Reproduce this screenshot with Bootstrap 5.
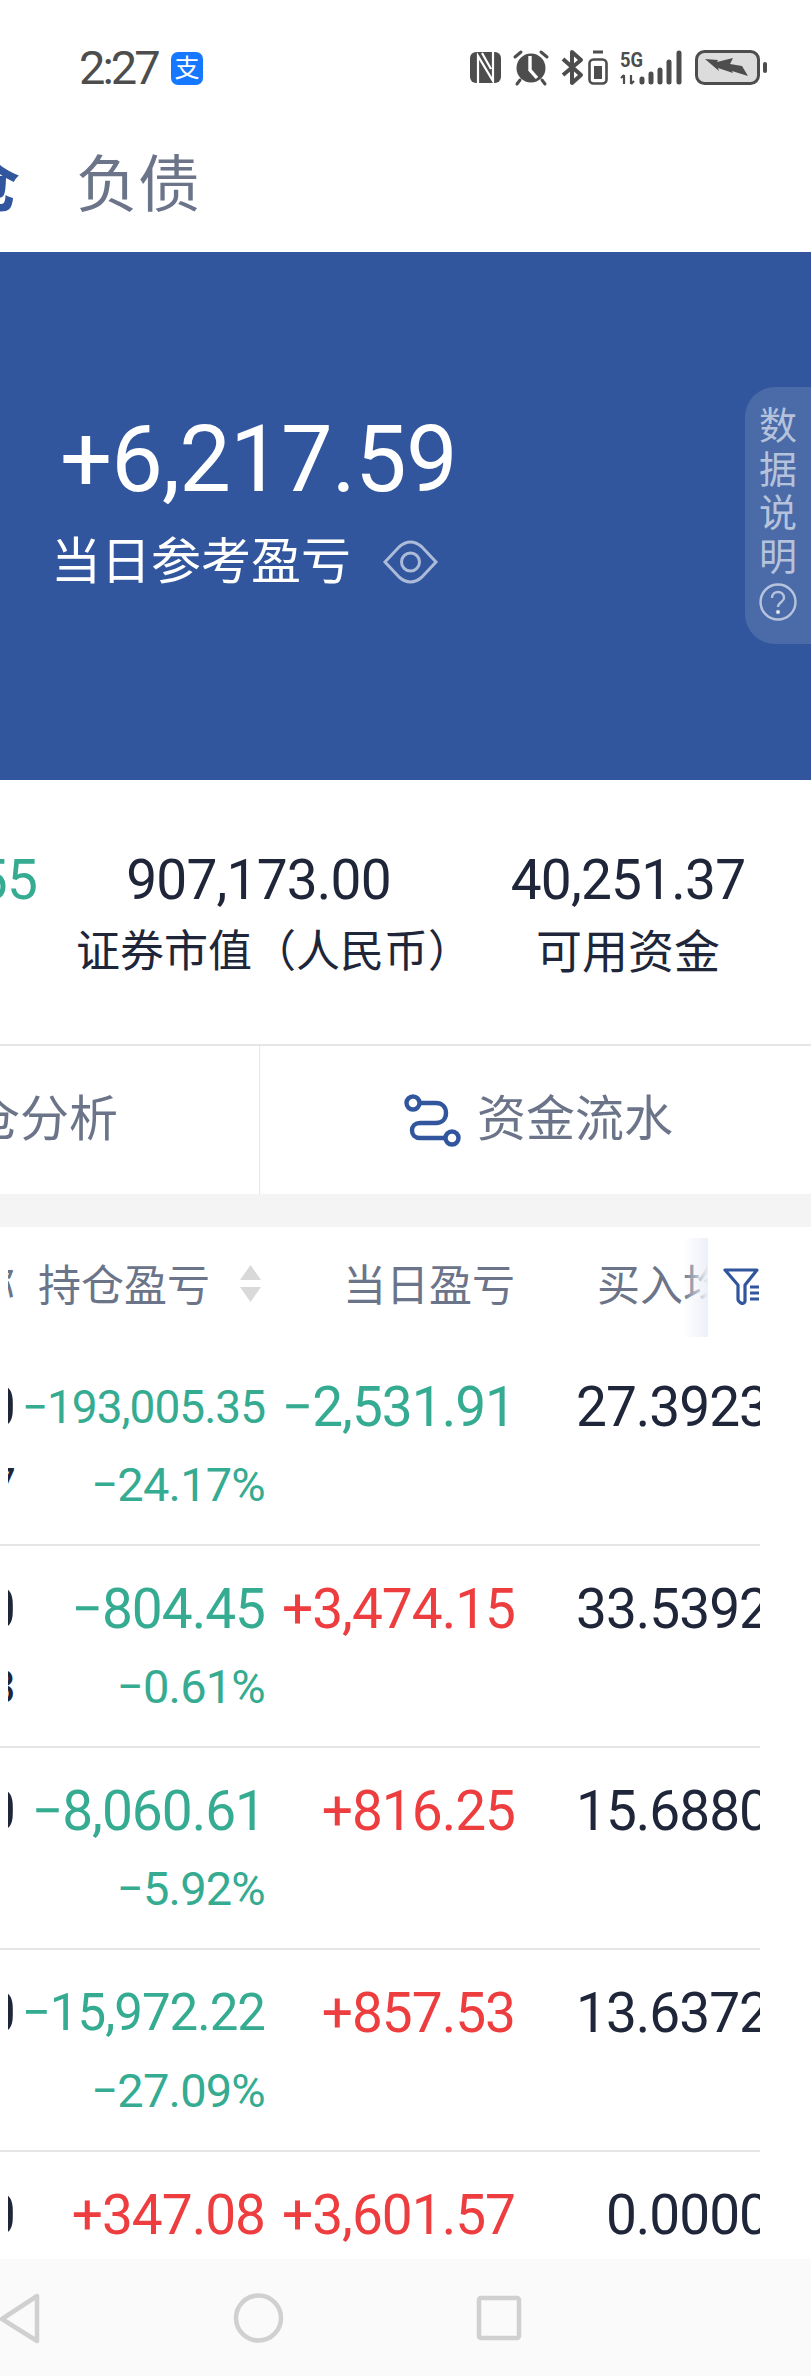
<!DOCTYPE html>
<html lang="zh-CN">
<head>
  <meta charset="UTF-8" />
  <meta name="viewport" content="width=device-width, initial-scale=1.0"/>
  <title>持仓</title>
  <link href="https://cdn.jsdelivr.net/npm/bootstrap@5.3.0/dist/css/bootstrap.min.css" rel="stylesheet"/>
  <style>
    html, body { width: 811px; height: 2376px; overflow: hidden; background: #fff; }
    body { font-family: Roboto, "Noto Sans CJK SC", sans-serif; color: #20263a; position: relative; }

    /* status bar */
    .status-bar { height: 128px; padding: 48px 0 0 79px; }
    .clock { font-size: 47px; line-height: 40px; letter-spacing: -3px; color: #4d4d4d; width: 92px; }
    .alipay { width: 32px; height: 33px; border-radius: 7px; background: #1677ff; color: #fff; font-size: 25px; line-height: 33px; text-align: center; margin-top: 4px; }
    .status-icons { margin-left: 265px; }

    /* tabs */
    .top-tabs { height: 124px; margin-left: -104px; font-size: 62px; line-height: 70px; padding-top: 23px; }
    .top-tabs .on { color: #31569d; font-weight: 700; width: 180px; flex: none; }
    .top-tabs .off { color: #6b7488; }

    /* banner */
    .banner { height: 528px; background: #31569d; color: #fff; position: relative; padding: 158px 0 0 60px; }
    .big-num { font-size: 92px; line-height: 100px; letter-spacing: -.9px; }
    .banner-label { font-size: 50px; line-height: 60px; margin: 22px 0 0 -9px; }
    .eye { margin-left: 31px; }
    .data-tab { position: absolute; right: 0; top: 135px; width: 66px; height: 257px; border-radius: 30px 0 0 30px; background: rgba(255,255,255,.12); color: rgba(255,255,255,.6); font-size: 38px; line-height: 43.5px; padding: 18px 0 0 14px; }

    /* stats */
    .stats { height: 264px; margin-left: -165px; padding-top: 68px; text-align: center; }
    .stat-num { font-size: 55px; line-height: 64px; letter-spacing: -.8px; }
    .stat-label { font-size: 44px; line-height: 60px; margin-top: 10px; white-space: nowrap; }
    .stat-a { width: 202px; flex: none; color: #35ab91; display: flex; justify-content: flex-end; align-items: flex-start; white-space: nowrap; }
    .stat-b { width: 396px; flex: none; margin-left: 39px; }
    .stat-b .stat-num { padding-right: 31px; }
    .stat-c { width: 240px; flex: none; margin-left: 36px; }
    .stat-c .stat-label { font-size: 46px; }

    .links { height: 150px; border-top: 2px solid #e6e6e6; font-size: 49px; color: #6b7488; }
    .link-left { width: 260px; flex: none; border-right: 1px solid #e6e6e6; overflow: hidden; justify-content: flex-end; padding-right: 141px; white-space: nowrap; }
    .link-right { padding-left: 144px; }
    .band { height: 33px; background: #f4f4f4; }

    /* table */
    .grid-wrap { width: 760px; overflow: hidden; height: 1032px; }
    .grid-head { height: 117px; font-size: 43px; color: #6b7488; line-height: 50px; white-space: nowrap; align-items: flex-start; padding-left: 8px; }
    .grid-head > div { margin-top: 34px; }
    .c0 { width: 7px; flex: none; overflow: hidden; display: flex; justify-content: flex-end; }
    .c1 { width: 250px; flex: none; text-align: right; }
    .c2 { width: 250px; flex: none; text-align: right; }
    .c3 { width: 254px; flex: none; text-align: right; }
    .head-c1 { width: 250px; flex: none; padding-left: 23px; display: flex; }
    .sort { margin: 4px 0 0 30px; }
    .head-c2 { width: 250px; flex: none; text-align: right; }
    .grid-head > .head-c3 { width: 193px; flex: none; overflow: hidden; padding: 23px 0 0 82px; position: relative; margin-top: 11px; height: 99px; }
    .head-c3::after { content: ""; position: absolute; right: 0; top: 0; bottom: 0; width: 25px; background: linear-gradient(to right, rgba(237,240,248,0), #edf0f8); }
    .filter { margin: 40px 0 0 15px; flex: none; }

    .grid-row { height: 202px; border-top: 2px solid #e6e6e6; font-size: 55px; letter-spacing: -1px; padding: 32px 0 0 8px; }
    .grid-row.first { border-top: 0; height: 200px; }
    .line-one { height: 62px; line-height: 62px; white-space: nowrap; }
    .line-two { font-size: 47px; line-height: 60px; margin-top: 17px; text-align: right; letter-spacing: -.8px; }
    .fall { color: #35ab91; }
    .rise { color: #ee3d3f; }
    .fit-s { font-size: 46px; }
    .fit-m { font-size: 51px; }

    /* nav bar */
    .nav-bottom { position: absolute; left: 0; right: 0; bottom: 0; height: 117px; background: #fafafa; }
  </style>
</head>
<body>

  <!-- status bar -->
  <div class="status-bar d-flex align-items-start">
    <div class="clock">2:27</div>
    <div class="alipay">支</div>
    <svg class="status-icons" width="300" height="40" viewBox="468 48 300 40">
      <!-- nfc -->
      <rect x="470" y="52" width="31" height="31" rx="6" fill="#4d4d4d"/>
      <path d="M478 84V56l15 25V51M482 53l9 16" stroke="#fff" stroke-width="2.200" fill="none"/>
      <!-- alarm -->
      <circle cx="531" cy="68" r="14.500" fill="#4d4d4d"/>
      <path d="M530 56v14l7 8" stroke="#fff" stroke-width="3.400" fill="none"/>
      <path d="M515 57l6-5M547 57l-6-5M520 80l-3 4M542 80l3 4" stroke="#4d4d4d" stroke-width="3" stroke-linecap="round"/>
      <!-- bluetooth -->
      <path d="M563 59l18 16-9 8V52l9 8-18 15" stroke="#4d4d4d" stroke-width="4" fill="none" stroke-linejoin="round"/>
      <!-- small battery -->
      <path d="M593 52h10" stroke="#4d4d4d" stroke-width="3"/>
      <rect x="589.500" y="59.500" width="17" height="24" rx="4" fill="none" stroke="#4d4d4d" stroke-width="2.600"/>
      <rect x="594" y="66" width="8" height="13" fill="#4d4d4d"/>
      <!-- signal -->
      <text x="620" y="67" font-family="Roboto" font-size="20" font-weight="700" fill="#4d4d4d" textLength="23" lengthAdjust="spacingAndGlyphs">5G</text>
      <path d="M624 75v9M621 78l3-3M631 75v9M634 81l-3 3" stroke="#4d4d4d" stroke-width="2.200" fill="none"/>
      <g stroke="#4d4d4d" stroke-width="5" stroke-linecap="round">
        <path d="M642 79v3M651 74v8M660 70v12M669 62v20M679 53v29"/>
      </g>
      <!-- battery -->
      <rect x="696.500" y="51.500" width="62" height="32" rx="8" fill="#dcdcdc" stroke="#4d4d4d" stroke-width="3"/>
      <path d="M705 59l13 1-1 2 16-4-3 6 12 2 6 10-16-5 1 2-15-5 1 3z" fill="#4d4d4d"/>
      <rect x="763" y="62" width="4" height="11" rx="2" fill="#4d4d4d"/>
    </svg>
  </div>

  <!-- tabs -->
  <div class="top-tabs d-flex">
    <div class="on">持仓</div>
    <div class="off">负债</div>
  </div>

  <!-- banner -->
  <div class="banner">
    <div class="big-num">+6,217.59</div>
    <div class="banner-label d-flex align-items-center">
      当日参考盈亏
      <svg class="eye" width="57" height="44" viewBox="0 0 57 44" fill="none" stroke="#fff" stroke-opacity=".6" stroke-width="3">
        <path d="M3 22L17 7Q28.500-3 40 7L54 22 40 37Q28.500 47 17 37z"/>
        <circle cx="28.500" cy="22" r="9"/>
      </svg>
    </div>
    <div class="data-tab">
      <div>数</div><div>据</div><div>说</div><div>明</div>
      <svg class="d-block mt-1" width="38" height="38" viewBox="0 0 38 38" fill="none" stroke="#fff" stroke-opacity=".6" stroke-width="2.400">
        <circle cx="19" cy="19" r="17.500"/>
        <path d="M13 15c0-4 3-6 6-6s6 2 6 6c0 4-6 4-6 9"/>
        <circle cx="19" cy="29" r="1" fill="#fff"/>
      </svg>
    </div>
  </div>

  <!-- stats -->
  <div class="stats d-flex">
    <div class="stat-a"><div class="stat-num">-1,234.55</div></div>
    <div class="stat-b">
      <div class="stat-num">907,173.00</div>
      <div class="stat-label">证券市值（人民币）</div>
    </div>
    <div class="stat-c">
      <div class="stat-num">40,251.37</div>
      <div class="stat-label">可用资金</div>
    </div>
  </div>

  <!-- links -->
  <div class="links d-flex">
    <div class="link-left d-flex align-items-center">持仓分析</div>
    <div class="link-right d-flex align-items-center">
      <svg class="me-3" width="57" height="53" viewBox="0 0 57 53" fill="none" stroke="#31569d" stroke-width="4.400">
        <circle cx="9" cy="9" r="6.500"/>
        <path d="M15 9h17c6 0 10 4 10 10s-4 10-10 10H16c-5 0-8 3-8 7.500s3 7.500 8 7.500h26"/>
        <circle cx="48" cy="44" r="6.500"/>
      </svg>
      <span>资金流水</span>
    </div>
  </div>
  <div class="band"></div>

  <!-- holdings -->
  <div class="grid-wrap">
    <div class="grid-head d-flex">
      <div class="c0">称</div>
      <div class="head-c1">
        <span>持仓盈亏</span>
        <svg class="sort" width="21" height="38" viewBox="0 0 21 38" fill="#d9d9d9">
          <path d="M10.500 0L21 15H0zM0 22h21L10.500 37z"/>
        </svg>
      </div>
      <div class="head-c2">当日盈亏</div>
      <div class="head-c3">买入均价</div>
      <svg class="filter" width="38" height="38" viewBox="0 0 38 38" fill="none" stroke="#31569d" stroke-width="3.200" stroke-linejoin="round">
        <path d="M2 3h32l-12 15v16c0 2-2 3-4 2-2-1-3-2-3-4V18z"/>
        <path d="M27 20h9M27 26h9M27 32h9"/>
      </svg>
    </div>

    <div class="grid-row first">
      <div class="line-one d-flex">
        <div class="c0">0</div>
        <div class="c1 fall fit-s">−193,005.35</div>
        <div class="c2 fall">−2,531.91</div>
        <div class="c3">27.3923</div>
      </div>
      <div class="d-flex">
        <div class="c0 line-two">7</div>
        <div class="c1 fall line-two">−24.17%</div>
      </div>
    </div>

    <div class="grid-row">
      <div class="line-one d-flex">
        <div class="c0">0</div>
        <div class="c1 fall">−804.45</div>
        <div class="c2 rise">+3,474.15</div>
        <div class="c3">33.5392</div>
      </div>
      <div class="d-flex">
        <div class="c0 line-two">3</div>
        <div class="c1 fall line-two">−0.61%</div>
      </div>
    </div>

    <div class="grid-row">
      <div class="line-one d-flex">
        <div class="c0">0</div>
        <div class="c1 fall">−8,060.61</div>
        <div class="c2 rise">+816.25</div>
        <div class="c3">15.6880</div>
      </div>
      <div class="d-flex">
        <div class="c0 line-two"></div>
        <div class="c1 fall line-two">−5.92%</div>
      </div>
    </div>

    <div class="grid-row">
      <div class="line-one d-flex">
        <div class="c0">0</div>
        <div class="c1 fall fit-m">−15,972.22</div>
        <div class="c2 rise">+857.53</div>
        <div class="c3">13.6372</div>
      </div>
      <div class="d-flex">
        <div class="c0 line-two"></div>
        <div class="c1 fall line-two">−27.09%</div>
      </div>
    </div>

    <div class="grid-row">
      <div class="line-one d-flex">
        <div class="c0">0</div>
        <div class="c1 rise">+347.08</div>
        <div class="c2 rise">+3,601.57</div>
        <div class="c3">0.0000</div>
      </div>
    </div>
  </div>

  <!-- android nav -->
  <div class="nav-bottom">
    <svg width="811" height="117" viewBox="0 0 811 117" fill="none" stroke="#d0d0d0" stroke-width="4.500" stroke-linejoin="round">
      <path d="M37 37v45L2 60z"/>
      <circle cx="258.500" cy="59" r="22.500"/>
      <rect x="479" y="39" width="40" height="40" rx="2"/>
    </svg>
  </div>

  <script src="https://cdn.jsdelivr.net/npm/bootstrap@5.3.0/dist/js/bootstrap.bundle.min.js"></script>
</body>
</html>
